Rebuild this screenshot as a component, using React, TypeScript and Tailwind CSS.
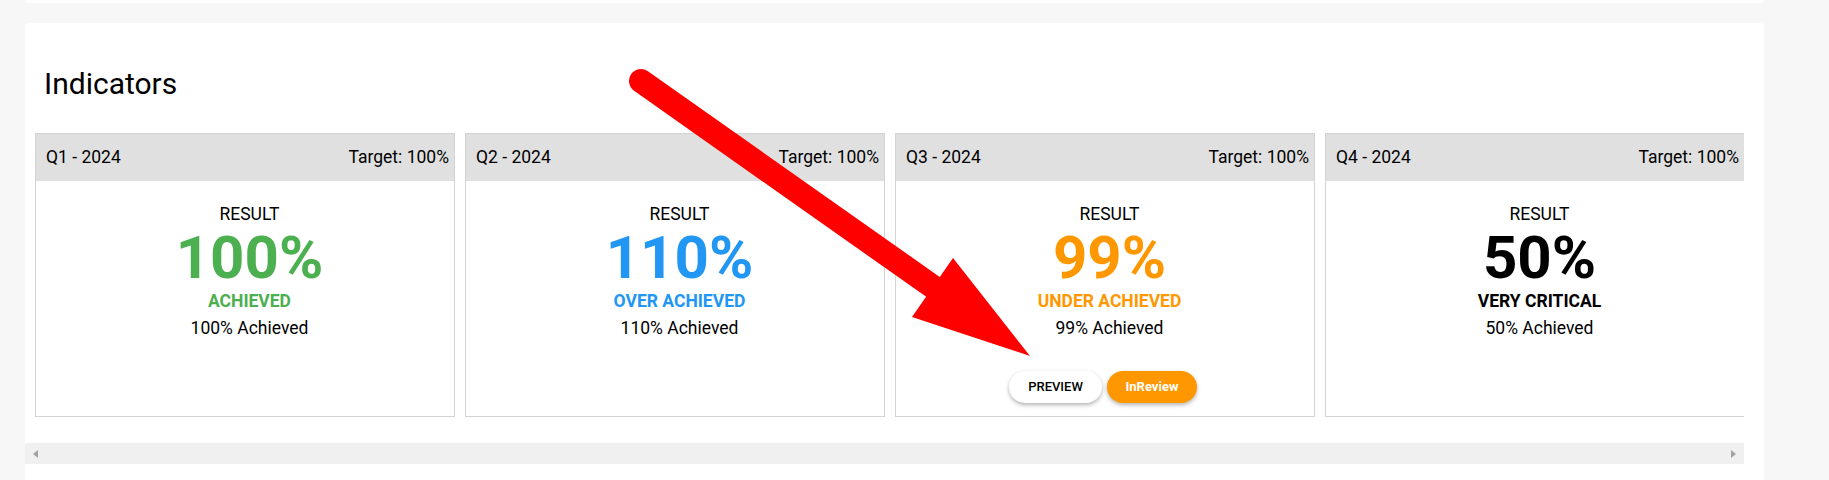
type Indicator = {
    quarter: string;
    value: string;
    status: string;
    color: string;
    achieved: string;
    actions?: boolean;
}

const indicators: Indicator[] = [
    { quarter: "Q1 - 2024", value: "100%", status: "ACHIEVED", color: "text-[#4caf50]", achieved: "100% Achieved" },
    { quarter: "Q2 - 2024", value: "110%", status: "OVER ACHIEVED", color: "text-[#2196f3]", achieved: "110% Achieved" },
    { quarter: "Q3 - 2024", value: "99%", status: "UNDER ACHIEVED", color: "text-[#ff9800]", achieved: "99% Achieved", actions: true },
    { quarter: "Q4 - 2024", value: "50%", status: "VERY CRITICAL", color: "text-black", achieved: "50% Achieved" },
];

function IndicatorCard({ item }: { item: Indicator }) {
    return (
        <div className="w-[420px] shrink-0 flex flex-col border border-[#d3d3d3] bg-white">
            <div className="h-[47px] flex items-center justify-between bg-[#e0e0e0] pl-[10px] pr-[5px] text-[17.5px] leading-[27px] text-black">
                <span>{item.quarter}</span>
                <span>Target: 100%</span>
            </div>
            <div className="flex-1 flex flex-col items-center pt-[20px] pb-[13px] text-black">
                <div className="flex flex-col items-center pl-[9px]">
                    <p className="text-[17.5px] leading-[27px]">RESULT</p>
                    <p className={`text-[60px] leading-[60px] font-bold ${item.color}`}>{item.value}</p>
                    <p className={`text-[17.5px] leading-[27px] font-bold ${item.color}`}>{item.status}</p>
                    <p className="text-[17.5px] leading-[27px]">{item.achieved}</p>
                </div>
                {item.actions && (
                    <div className="mt-[29px] flex gap-[5px] pr-[4px]">
                        <button className="h-[32px] w-[93px] rounded-full bg-white text-[13px] font-medium text-black shadow-[0_2px_4px_rgba(0,0,0,0.3)]">
                            PREVIEW
                        </button>
                        <button className="h-[32px] w-[90px] rounded-full bg-[#ff9800] text-[13px] font-bold text-white shadow-[0_2px_4px_rgba(0,0,0,0.3)]">
                            InReview
                        </button>
                    </div>
                )}
            </div>
        </div>
    )
}

export default function App() {
    return (
        <div className="relative w-[1829px] min-h-[480px] bg-[#f7f7f7] font-['Roboto',sans-serif] overflow-hidden">
            <div className="ml-[25px] w-[1739px] h-[3px] bg-white rounded-b-[4px]" />
            <div className="ml-[25px] mt-[20px] w-[1739px] bg-white rounded-t-[4px] pt-[43px] pb-[20px]">
                <h2 className="pl-[19px] text-[30px] leading-[36px] text-black">Indicators</h2>
                <div className="mt-[31px] w-[1719px] overflow-hidden">
                    <div className="flex gap-[10px] pl-[10px]">
                        {indicators.map((item) => (
                            <IndicatorCard key={item.quarter} item={item} />
                        ))}
                    </div>
                </div>
                <div className="mt-[26px] w-[1719px] h-[21px] bg-[#f0f0f0] flex items-center justify-between px-[8px]">
                    <span className="w-0 h-0 border-y-[4.5px] border-y-transparent border-r-[5px] border-r-[#a3a3a3]" />
                    <span className="w-0 h-0 border-y-[4.5px] border-y-transparent border-l-[5px] border-l-[#a3a3a3]" />
                </div>
            </div>
            {/* annotation arrow drawn over the page */}
            <svg className="absolute left-0 top-0 pointer-events-none" width="1829" height="480" viewBox="0 0 1829 480">
                <line x1="641" y1="81" x2="936" y2="289" stroke="#ff0000" strokeWidth="24" strokeLinecap="round" />
                <polygon points="953,258 1030,356 912,317" fill="#ff0000" />
            </svg>
        </div>
    )
}
